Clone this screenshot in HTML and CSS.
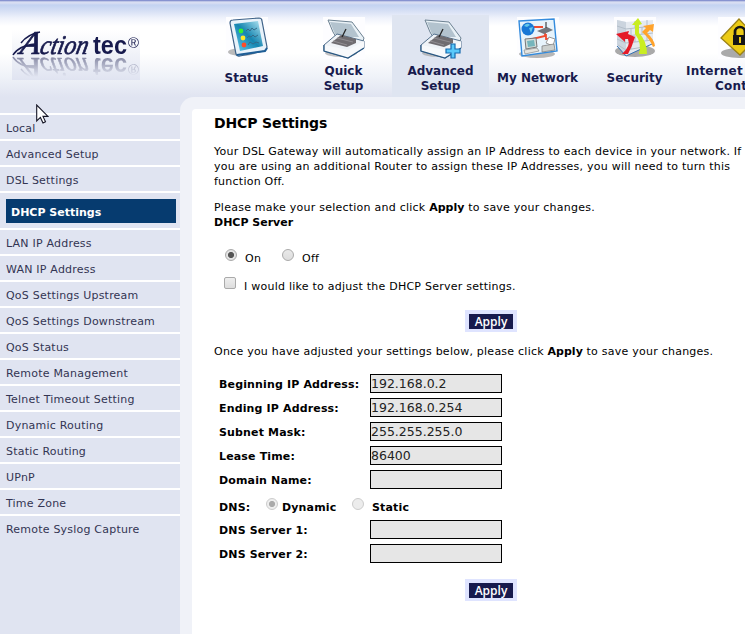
FILE: index.html
```html
<!DOCTYPE html>
<html lang="en">
<head>
<meta charset="utf-8">
<title>DHCP Settings</title>
<link rel="stylesheet" href="styles.css">
</head>
<body>
<header class="top">
  <div class="brand">
    <svg class="logo" width="128" height="26" viewBox="0 0 128 26">
      <g class="script" transform="translate(5 0) skewX(-12)"><text x="7" y="24" font-size="33" textLength="20" lengthAdjust="spacingAndGlyphs">A</text>
      <text x="27" y="24" font-size="27" textLength="48" lengthAdjust="spacingAndGlyphs">ction</text></g>
      <path d="M1 25Q6 16 23 14M9 13Q16 4 28 2" fill="none" stroke="#171a4d" stroke-width="1.5"/>
      <text class="tec" x="81" y="24" font-size="25" textLength="34" lengthAdjust="spacingAndGlyphs">tec</text>
      <text class="reg" x="116" y="18" font-size="15" textLength="11" lengthAdjust="spacingAndGlyphs">®</text>
    </svg>
  </div>
  <nav class="tabs">
    <a class="tab">
      <svg class="icon" viewBox="0 0 42 42">
        <rect width="42" height="42" fill="#fdfdff"/>
        <ellipse cx="16" cy="35" rx="14" ry="4" fill="#aaa" opacity=".8"/>
        <path d="M4 6Q4 3 7 3L33 1Q36 1 36 4L41 30Q41 33 38 34L14 39Q11 40 10 37Z" fill="#e8f2fa" stroke="#3e6288" stroke-width="1.2"/>
        <path d="M11 38L39 34L41 31" fill="none" stroke="#1e5e96" stroke-width="2"/>
        <path d="M8 7L32 4L37 29L14 34Z" fill="url(#screen)"/>
        <circle cx="15" cy="14" r="2.4" fill="#35ef35"/><circle cx="17" cy="21" r="2.4" fill="#ffe928"/><circle cx="18" cy="28" r="2.4" fill="#ff4c28"/>
        <path d="M20 14l2-2 2 2 2-3 2 2 3-2M21 21l2-2 2 1 2-2 2 2 3-2M22 28l2-3 3 2 3-2 3 1" fill="none" stroke="#346b89"/>
        <defs><linearGradient id="screen" x1="0" y1="1" x2="1" y2="0"><stop stop-color="#65cced"/><stop offset=".5" stop-color="#1585b0"/><stop offset="1" stop-color="#bcebf7"/></linearGradient></defs>
      </svg>
      <span>Status</span>
    </a>
    <a class="tab">
      <svg class="icon" viewBox="0 0 42 42">
        <rect width="42" height="42" fill="#fdfdff"/>
        <g id="box">
          <ellipse cx="18" cy="36" rx="16" ry="4" fill="#999" opacity=".6"/>
          <path d="M5 3L29 5L41 21L39 27L13 20L10 15Z" fill="#e9f1f6" stroke="#6d8292"/>
          <path d="M7 5L28 7L36 20L20 20L12 17Z" fill="#b3c3ce"/>
          <path d="M1 28L14 17L41 24V31L25 41L1 34Z" fill="#eff3f7" stroke="#54718d"/>
          <path d="M8 26L18 18L33 22V26L24 30Z" fill="#6f6c70"/><path d="M10 24l14 4M14 21l16 4" stroke="#918e92"/>
          <path d="M19 20L23 12" stroke="#222" stroke-width="1.2"/>
          <path d="M1 28L25 33L41 24V31L25 41L1 34Z" fill="#f7f9fb"/><path d="M1 28V34L25 41L41 31" fill="none" stroke="#285782" stroke-width="1.3"/>
        </g>
      </svg>
      <span>Quick<br>Setup</span>
    </a>
    <a class="tab current">
      <svg class="icon" viewBox="0 0 42 42">
        <use href="#box"/>
        <path d="M31 27h4v5h5v4h-5v5h-4v-5h-5v-4h5Z" fill="#59c9fa" stroke="#176aaf" stroke-width="1.2"/>
      </svg>
      <span>Advanced<br>Setup</span>
    </a>
    <a class="tab">
      <svg class="icon" viewBox="0 0 42 42">
        <rect width="42" height="42" fill="#fdfdff"/>
        <ellipse cx="20" cy="37" rx="18" ry="4" fill="#999" opacity=".7"/>
        <path d="M2 4L37 2L40 34L5 39Z" fill="#e7f3fb" stroke="#338bdd" stroke-width="1.4"/>
        <path d="M17 10h9M28 15v4l-13 3v3M29 17v5h5v4" fill="none" stroke="#ef4c30" stroke-width="1.8"/>
        <circle cx="11" cy="12" r="6.5" fill="#1777d5"/><path d="M7 9q3-4 6-1l-3 2zM12 11l4-1-2 6z" fill="#63c6e8"/>
        <path d="M20 14l10-4 6 3-9 4z" fill="#73777d"/><path d="M29 11V5" stroke="#222"/>
        <path d="M8 22l11-1 1 9-11 2z" fill="#d4ddd9" stroke="#777"/><path d="M10 24l7-1 1 6-7 1z" fill="#75b5bc"/><path d="M7 33l13-2 2 3-14 3z" fill="#e4e4df" stroke="#888" stroke-width=".7"/>
        <path d="M29 26l3-6 6 2-2 7z" fill="#fff" stroke="#999"/><path d="M25 29l12-2 1 6-13 2z" fill="#ccd0ce" stroke="#777" stroke-width=".7"/>
      </svg>
      <span>My Network</span>
    </a>
    <a class="tab">
      <svg class="icon" viewBox="0 0 42 42">
        <rect width="42" height="42" fill="#fdfdff"/>
        <ellipse cx="21" cy="34" rx="20" ry="6" fill="#aaa"/>
        <path d="M3 3L12 5L39 3V26L12 39L3 28Z" fill="#e5eaf0"/>
        <path d="M3 3L12 5V39L3 28Z" fill="#cbd4de"/>
        <path d="M3 9l9 3 27-3M3 16l9 3 27-3M3 22l9 4 27-3M4 28l8 5 23-4M21 4v7M33 3v6M17 12v7M28 10v7M21 19v6M33 17v6M17 26v6M27 24v6" fill="none" stroke="#b3bec9"/>
        <path d="M3 29L12 39L38 27" fill="none" stroke="#3472b5"/>
        <path d="M8 37Q17 29 14 22L11 22L11 25L2 17L15 14L14 17L21 20Q18 30 14 37Z" fill="#e51b28"/>
        <path d="M25 37Q28 26 21 17L21 8L18 8L24 1L28 7L25 8L25 16Q33 24 33 37Z" fill="#c9ed22"/>
        <path d="M39 30Q36 22 28 15L32 11L29 9L40 7L39 15L36 13L33 16Q40 22 41 29Z" fill="#ffa32b"/>
      </svg>
      <span>Security</span>
    </a>
    <a class="tab wide">
      <svg class="icon" viewBox="0 0 42 42">
        <rect width="42" height="42" fill="#fdfdff"/>
        <ellipse cx="21" cy="36" rx="18" ry="5" fill="#aaa"/>
        <path d="M3 21L21 2L39 21L22 38Z" fill="#eccb15" stroke="#9b8217" stroke-width="1.3"/>
        <path d="M17 18v-3a5 5 0 0 1 10 0v3" fill="none" stroke="#151515" stroke-width="2.7"/><path d="M15 18h14v10H15Z" fill="#151515"/><path d="M21 20h2v6h-2z" fill="#eccb15"/>
      </svg>
      <span>Internet<br><i>Cont</i></span>
    </a>
  </nav>
</header>
<div class="body">
  <aside class="side">
    <a>Local</a><a>Advanced Setup</a><a>DSL Settings</a>
    <a class="selected"><b>DHCP Settings</b></a>
    <a>LAN IP Address</a><a>WAN IP Address</a><a>QoS Settings Upstream</a><a>QoS Settings Downstream</a><a>QoS Status</a><a>Remote Management</a><a>Telnet Timeout Setting</a><a>Dynamic Routing</a><a>Static Routing</a><a>UPnP</a><a>Time Zone</a><a>Remote Syslog Capture</a>
  </aside>
  <div class="frame">
    <main>
      <h1>DHCP Settings</h1>
      <p>Your DSL Gateway will automatically assign an IP Address to each device in your network. If<br>you are using an additional Router to assign these IP Addresses, you will need to turn this<br>function Off.</p>
      <p>Please make your selection and click <b>Apply</b> to save your changes.<br><b>DHCP Server</b></p>
      <div class="choices">
        <span class="radio on"></span><label class="on-label">On</label>
        <span class="radio"></span><label>Off</label>
      </div>
      <div class="adjust"><span class="check"></span><label>I would like to adjust the DHCP Server settings.</label></div>
      <div class="action"><button>Apply</button></div>
      <p class="then">Once you have adjusted your settings below, please click <b>Apply</b> to save your changes.</p>
      <form class="fields">
        <div class="field"><label>Beginning IP Address:</label><div class="input">192.168.0.2</div></div>
        <div class="field"><label>Ending IP Address:</label><div class="input">192.168.0.254</div></div>
        <div class="field"><label>Subnet Mask:</label><div class="input">255.255.255.0</div></div>
        <div class="field"><label>Lease Time:</label><div class="input">86400</div></div>
        <div class="field"><label>Domain Name:</label><div class="input"></div></div>
        <div class="dns"><label class="dns-label">DNS:</label><span class="radio on off"></span><label class="dynamic">Dynamic</label><span class="radio off"></span><label class="static">Static</label></div>
        <div class="field"><label>DNS Server 1:</label><div class="input"></div></div>
        <div class="field"><label>DNS Server 2:</label><div class="input"></div></div>
      </form>
      <div class="action last"><button>Apply</button></div>
    </main>
  </div>
</div>
<svg class="cursor" width="13" height="20" viewBox="0 0 13 20"><path d="M.7 1V17L4.4 13.4L7 19L9.5 17.8L7 12.4H12Z" fill="#fff" stroke="#151525" stroke-width="1.1"/></svg>
</body>
</html>
```
FILE: styles.css
```css
* { box-sizing: border-box; }
body {
  margin: 0;
  height: 634px;
  overflow: hidden;
  background: #e0e4f1;
  color: #000;
  font: 11px/15px "DejaVu Sans", sans-serif;
  letter-spacing: 0.24px;
}
.top {
  display: flex;
  height: 97px;
  border-top: 1px solid #8793d0;
  background: linear-gradient(#a5aedb 0, #d8def2 1px, #d8def2 2px, #c3d3f1 4px, #d3ddf4 9px, #eff2fb 17px, #fff 25px, #fff 52px, #eff2f8 76px, #e0e4f1 96px);
}
.brand { position: relative; flex: 0 0 198px; padding: 29px 0 0 12px; }
.brand::before {
  content: "";
  position: absolute;
  left: 12px;
  top: 29px;
  width: 128px;
  height: 50px;
  background: linear-gradient(#fff, #e0e4f1);
}
.logo {
  position: relative;
  display: block;
  overflow: visible;
  -webkit-box-reflect: below 0 linear-gradient(transparent 20%, rgba(0, 0, 0, 0.5));
}
.logo text { fill: #171a4d; letter-spacing: 0; }
.script { font-family: "Liberation Serif", serif; font-style: italic; stroke: #171a4d; stroke-width: 0.7px; }
.tec { font-family: "Liberation Sans", sans-serif; font-weight: bold; }
.reg { font-family: "Liberation Sans", sans-serif; }
.tabs { display: flex; flex: 1; overflow: hidden; }
.tab {
  flex: 0 0 97px;
  display: flex;
  flex-direction: column;
  align-items: center;
  padding-top: 16px;
  color: #171a4d;
  font-size: 12px;
  font-weight: bold;
  letter-spacing: 0;
  text-align: center;
}
.icon { flex: none; width: 42px; height: 42px; margin-bottom: 5px; }
.tab > span { height: 30px; white-space: nowrap; }
.tab:nth-child(1) > span, .tab:nth-child(4) > span, .tab:nth-child(5) > span { padding-top: 7px; }
.current { background: #dfe5f1; margin-top: 14px; padding-top: 2px; }
.wide { align-items: flex-start; padding-left: 3px; text-align: left; letter-spacing: 0.2px; }
.wide .icon { margin-left: 32px; }
.wide i { margin-left: 29px; font-style: normal; }
.body { display: flex; height: 537px; }
.side { flex: 0 0 180px; padding-top: 16px; letter-spacing: 0.21px; }
.side a {
  display: block;
  height: 26px;
  padding: 6px 0 0 6px;
  border-top: 2px solid #fff;
  color: #333553;
  line-height: 15px;
}
.side .selected { height: 37px; padding: 6px 4px 0 6px; }
.selected b { display: block; height: 24px; padding: 6px 5px 0; background: #063b6f; color: #fff; letter-spacing: 0; }
.frame { flex: 1; padding: 12px 0 0 12px; border-top-left-radius: 14px; background: #f0f2f8; }
main { height: 525px; padding: 5px 0 0 22px; border-top-left-radius: 4px; background: #fff; white-space: nowrap; }
h1 { margin: 0 0 11px; font-size: 14px; line-height: 19px; letter-spacing: -0.13px; }
p { margin: 0 0 11px; }
b { font-weight: bold; letter-spacing: 0; }
.choices { display: flex; height: 34px; padding: 8px 0 0 11px; }
.radio { flex: none; width: 12px; height: 12px; border: 1px solid #aaa; border-radius: 50%; background: linear-gradient(#e9e9e9, #ddd); }
.radio.on { background: radial-gradient(circle, #555 0 2.7px, #e3e3e3 3.4px); }
.radio.off { border-color: #ccc; background: #ececec; }
.radio.on.off { background: radial-gradient(circle, #aaa 0 2.7px, #eee 3.4px); }
.choices label { margin: 2px 0 0 8px; }
.choices .on-label { width: 37px; }
.adjust { display: flex; height: 36px; margin-top: -1px; padding: 3px 0 0 10px; }
.check { width: 12px; height: 12px; border: 1px solid #aaa; border-radius: 2px; background: linear-gradient(#eee, #ddd); }
.adjust label { margin: 2px 0 0 8px; }
.action { height: 22px; padding-left: 251px; }
button {
  display: block;
  width: 52px;
  height: 22px;
  padding: 0;
  border: 4px solid #dfe4ff;
  border-width: 4px 4px 3px;
  background: #171a4d;
  color: #fff;
  font: 600 12px/15px "Open Sans", sans-serif;
}
.then { margin: 12px 0 15px; }
.fields { margin: 0; padding-left: 5px; }
.fields label { font-weight: bold; letter-spacing: 0.15px; }
.field { display: flex; height: 24px; align-items: flex-start; }
.field label { width: 151px; padding-top: 3px; }
.input { width: 132px; height: 19px; padding-left: 0; border: 1px solid #000; background: #e6e6e6; color: #222; font-size: 12.5px; line-height: 17px; letter-spacing: 0; }
.dns { display: flex; height: 26px; padding-top: 4px; }
.dns label { padding-top: 2px; }
.dns-label { width: 47px; }
.fields .dynamic { width: 74px; padding-left: 4px; }
.fields .static { padding-left: 8px; }
.last { margin-top: 11px; }
.cursor { position: absolute; left: 36px; top: 104px; }
```
